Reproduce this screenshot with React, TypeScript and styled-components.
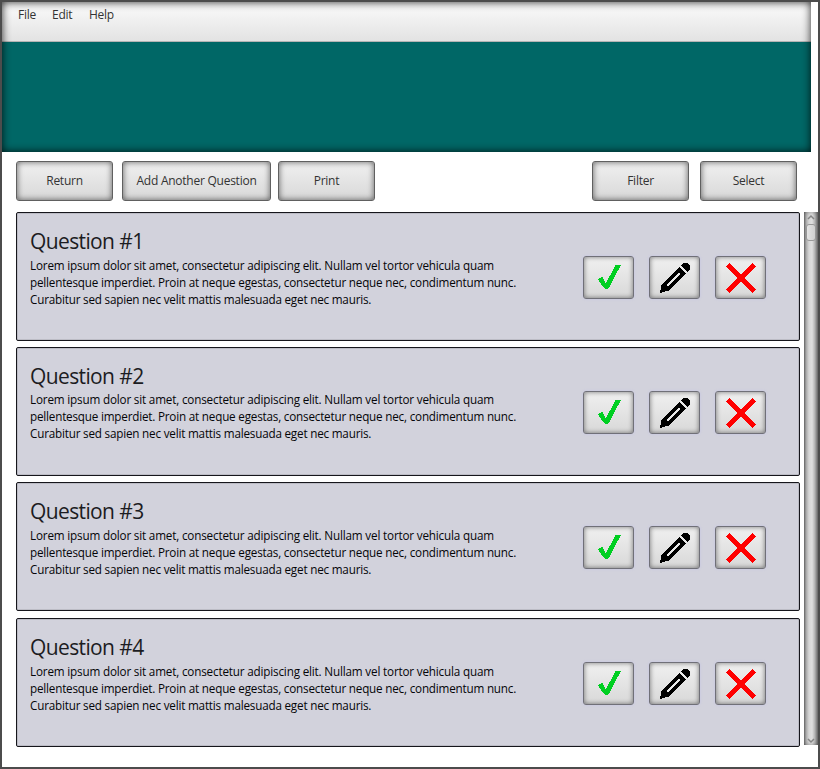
import React from 'react';
import styled, { createGlobalStyle } from 'styled-components';

const GlobalStyle = createGlobalStyle`
  * { box-sizing: border-box; }
  body { margin: 0; background: #fff; font-family: "Open Sans", "Noto Sans", sans-serif; }
  button { font: inherit; margin: 0; }
`;

const Window = styled.div`
  width: 820px;
  height: 769px;
  border: 2px solid #4c4c4c;
  background: #fff;
  overflow: hidden;
`;

const Header = styled.header`
  position: relative;
  width: 809px;
  height: 150px;
  background: #006766;
  &::after {
    content: '';
    position: absolute;
    inset: 0;
    box-shadow: inset 0 0 8px rgba(0, 0, 0, 0.85);
    pointer-events: none;
  }
`;

const MenuBar = styled.nav`
  display: flex;
  align-items: flex-start;
  gap: 16px;
  height: 40px;
  padding: 4px 16px 0;
  background: linear-gradient(#fbfbfb, #e3e3e3);
  border-bottom: 1px solid #b4b4b4;
`;

const MenuItem = styled.span<{ $width: number }>`
  width: ${(p) => p.$width}px;
  font-size: 12px;
  line-height: 18px;
  letter-spacing: -0.25px;
  white-space: nowrap;
  color: #333;
`;

const Toolbar = styled.div`
  display: flex;
  height: 60px;
  padding: 9px 21px 0 14px;
`;

const BevelButton = styled.button`
  display: flex;
  align-items: center;
  justify-content: center;
  padding: 0;
  border: 1px solid #606060;
  border-radius: 3px;
  background: linear-gradient(#f0f0f0, #d8d8d8);
  box-shadow: inset 0 0 6px rgba(0, 0, 0, 0.6);
  color: #333;
`;

const ToolButton = styled(BevelButton)<{ $width?: number; $before?: string }>`
  width: ${(p) => p.$width ?? 97}px;
  height: 40px;
  margin-left: ${(p) => p.$before ?? '0'};
  padding-bottom: 1px;
  font-size: 12px;
  letter-spacing: -0.25px;
`;

const Content = styled.main`
  display: flex;
  align-items: flex-start;
  justify-content: space-between;
  height: 555px;
  padding-left: 14px;
`;

const List = styled.div`
  display: flex;
  flex-direction: column;
  width: 784px;
`;

const Card = styled.article<{ $gap: number }>`
  display: flex;
  justify-content: space-between;
  height: 129px;
  margin-bottom: ${(p) => p.$gap}px;
  padding: 0 33px 0 13px;
  border: 1px solid #16161c;
  border-radius: 2px;
  background: #d2d2dc;
  box-shadow: inset 0 0 0 1px #bcbcc5;
`;

const Title = styled.h2`
  margin: 13px 0 0;
  font-size: 21px;
  line-height: 30px;
  font-weight: 400;
  letter-spacing: -0.62px;
  color: #1c1c22;
`;

const Body = styled.p<{ $shift: number }>`
  margin: ${(p) => p.$shift}px 0 0;
  font-size: 11.7px;
  line-height: 17px;
  color: #050508;
`;

const Line = styled.span<{ $spacing: number }>`
  display: block;
  white-space: nowrap;
  letter-spacing: ${(p) => p.$spacing}px;
`;

const Actions = styled.div`
  display: flex;
  gap: 15px;
  padding-top: 43px;
`;

const IconButton = styled(BevelButton)`
  width: 51px;
  height: 43px;
  border-color: #707078;
  box-shadow: inset 0 0 5px rgba(0, 0, 0, 0.5), 0 0 3px #c4c4e4;
`;

const Glyph = styled.svg`
  flex: none;
  width: 49px;
  height: 41px;
  shape-rendering: crispEdges;
`;

const Scrollbar = styled.div`
  display: flex;
  flex-direction: column;
  align-items: center;
  justify-content: space-between;
  width: 14px;
  height: 533px;
  background: linear-gradient(90deg, #777 0, #b0b0b0 2px, #d6d6d6 5px, #dedede 8px, #b4b4b4 11px, #787878 14px);
  box-shadow: inset 0 0 4px rgba(0, 0, 0, 0.35);
`;

const ThumbGroup = styled.div`
  display: flex;
  flex-direction: column;
  align-items: center;
`;

const Thumb = styled.div`
  width: 10px;
  height: 17px;
  border: 1px solid #999;
  border-radius: 3px;
  background: linear-gradient(90deg, #e4e4e4, #cfcfcf);
`;

const Arrow = styled.svg`
  display: block;
  width: 14px;
  height: 12px;
`;

const Check = () => (
  <Glyph viewBox="1 1 49 41">
    <path d="M15 23L19.5 21L22.8 27.5L32.5 9H38L31.5 21L25.5 32.5H22L18.5 29Z" fill="#00cf22" />
  </Glyph>
);

const Pencil = () => (
  <Glyph viewBox="1 1 49 41">
    <path d="M11 37L12.5 29L30.5 11L37 17.5L19 35L15.5 35.5Z" fill="#000" />
    <path d="M32 9.5L34.5 7.3H38.5L41 10V13.5L38.5 16Z" fill="#000" />
    <path d="M18 30L30.5 17.5" stroke="#e8e8e8" strokeWidth="2" />
  </Glyph>
);

const Cross = () => (
  <Glyph viewBox="1 1 49 41">
    <path d="M12.8 8.5L39.2 35M39.2 8.5L12.8 35" stroke="#f00" strokeWidth="5" />
  </Glyph>
);

const lines = [
  { text: 'Lorem ipsum dolor sit amet, consectetur adipiscing elit. Nullam vel tortor vehicula quam', spacing: -0.175 },
  { text: 'pellentesque imperdiet. Proin at neque egestas, consectetur neque nec, condimentum nunc.', spacing: -0.2 },
  { text: 'Curabitur sed sapien nec velit mattis malesuada eget nec mauris.', spacing: -0.2 },
];

const questions = [
  { title: 'Question #1', gap: 6, shift: 1 },
  { title: 'Question #2', gap: 6, shift: 0 },
  { title: 'Question #3', gap: 7, shift: 1 },
  { title: 'Question #4', gap: 0, shift: 1 },
];

export default function App() {
  return (
    <Window>
      <GlobalStyle />
      <Header>
        <MenuBar>
          <MenuItem $width={18}>File</MenuItem>
          <MenuItem $width={21}>Edit</MenuItem>
          <MenuItem $width={26}>Help</MenuItem>
        </MenuBar>
      </Header>
      <Toolbar>
        <ToolButton>Return</ToolButton>
        <ToolButton $width={149} $before="9px">Add Another Question</ToolButton>
        <ToolButton $before="7px">Print</ToolButton>
        <ToolButton $before="auto">Filter</ToolButton>
        <ToolButton $before="11px">Select</ToolButton>
      </Toolbar>
      <Content>
        <List>
          {questions.map((q) => (
            <Card key={q.title} $gap={q.gap}>
              <div>
                <Title>{q.title}</Title>
                <Body $shift={q.shift}>
                  {lines.map((l) => (
                    <Line key={l.text} $spacing={l.spacing}>{l.text}</Line>
                  ))}
                </Body>
              </div>
              <Actions>
                <IconButton aria-label="Approve"><Check /></IconButton>
                <IconButton aria-label="Edit"><Pencil /></IconButton>
                <IconButton aria-label="Delete"><Cross /></IconButton>
              </Actions>
            </Card>
          ))}
        </List>
        <Scrollbar>
          <ThumbGroup>
            <Arrow viewBox="0 0 14 12"><path d="M4 7L7 4L10 7" fill="none" stroke="#858585" strokeWidth="1.5" /></Arrow>
            <Thumb />
          </ThumbGroup>
          <Arrow viewBox="0 0 14 12"><path d="M4 6L7 9L10 6" fill="none" stroke="#858585" strokeWidth="1.5" /></Arrow>
        </Scrollbar>
      </Content>
    </Window>
  );
}
